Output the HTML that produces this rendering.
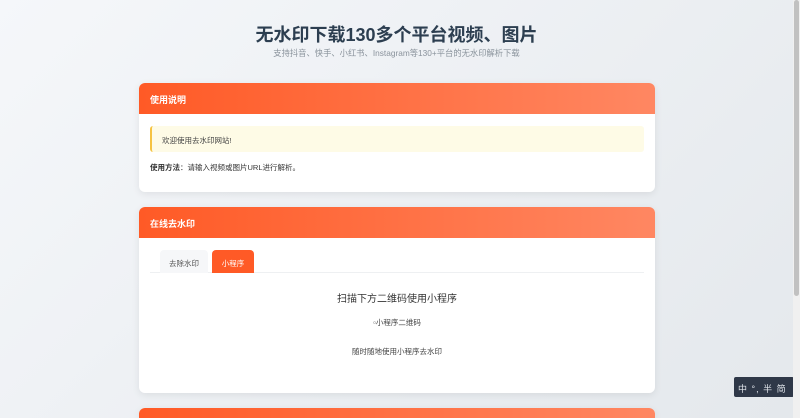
<!DOCTYPE html>
<html><head><meta charset="utf-8"><style>
*{box-sizing:border-box;margin:0;padding:0}
html{width:800px;height:418px;overflow:hidden}
body{width:800px;height:418px;overflow:hidden;font-family:"Liberation Sans","Noto Sans CJK SC",sans-serif;background:linear-gradient(135deg,#f5f7fa,#e4e8ec);position:relative}
.sb{position:absolute;right:0;top:0;width:7px;height:418px;background:#f0f0f0}
.sb div{position:absolute;left:1px;top:0;width:5px;height:296px;background:#c1c1c1;border-radius:3px}
h1{position:absolute;top:21px;left:0;width:793px;text-align:center;font-size:18px;font-weight:bold;color:#2c3e50}
.sub{position:absolute;top:47px;left:0;width:793px;text-align:center;font-size:8.3px;color:#8a939c}
.card{position:absolute;left:139px;width:516px;background:#fff;border-radius:6px;overflow:hidden;box-shadow:0 2px 8px rgba(0,0,0,.08)}
.hd{height:31px;background:linear-gradient(90deg,#ff5a26,#ff8762);color:#fff;font-weight:bold;font-size:9px;padding:10px 11px}
.notice{margin:12px 11px 0;height:26px;background:#fefbe6;border-left:2px solid #f6c342;border-radius:3px;font-size:7.5px;color:#444;padding:9px 10px}
.use{margin:10px 11px;font-size:7.5px;color:#333}
.tabs{position:relative;margin:12px 11px 0;height:23px;border-bottom:1px solid #eef0f2}
.tab{position:absolute;top:0;height:23px;border-radius:4px 4px 0 0;font-size:7.5px;padding:8px 0;text-align:center}
</style></head><body>
<h1>无水印下载130多个平台视频、图片</h1>
<div class="sub">支持抖音、快手、小红书、Instagram等130+平台的无水印解析下载</div>
<div class="card" style="top:83px;height:109px"><div class="hd">使用说明</div>
<div class="notice">欢迎使用去水印网站!</div>
<div class="use"><b>使用方法</b>：请输入视频或图片URL进行解析。</div></div>
<div class="card" style="top:207px;height:186px"><div class="hd">在线去水印</div>
<div class="tabs"><div class="tab" style="left:10px;width:48px;background:#f6f7f9;color:#555">去除水印</div><div class="tab" style="left:62px;width:42px;background:#ff5a26;color:#fff">小程序</div></div>
<div style="text-align:center;font-size:10px;color:#333;margin-top:17px">扫描下方二维码使用小程序</div>
<div style="text-align:center;font-size:7.5px;color:#444;margin-top:12px">▫小程序二维码</div>
<div style="text-align:center;font-size:7.5px;color:#444;margin-top:18px">随时随地使用小程序去水印</div></div>
<div class="card" style="top:408px;height:10px;border-radius:6px 6px 0 0"><div class="hd"></div></div>
<div style="position:absolute;left:734px;top:377px;width:60px;height:20px;background:#2f3848;color:#e0e4ea;font-size:9px;padding:5px 4px;letter-spacing:1px;border-radius:2px;white-space:nowrap">中 °, 半 简</div>
<div class="sb"><div></div></div>
</body></html>
